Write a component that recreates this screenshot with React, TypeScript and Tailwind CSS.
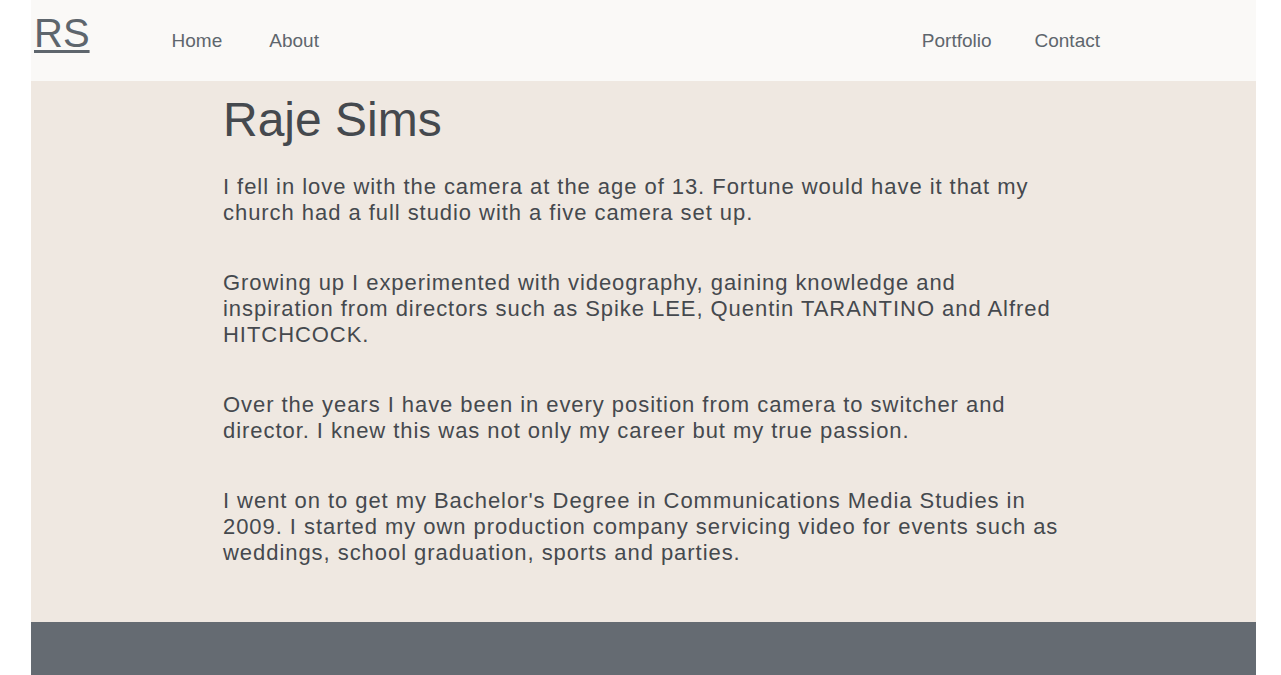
const leftLinks = ['Home', 'About'];
const rightLinks = ['Portfolio', 'Contact'];

const paragraphs = [
  'I fell in love with the camera at the age of 13. Fortune would have it that my church had a full studio with a five camera set up.',
  'Growing up I experimented with videography, gaining knowledge and inspiration from directors such as Spike LEE, Quentin TARANTINO and Alfred HITCHCOCK.',
  'Over the years I have been in every position from camera to switcher and director. I knew this was not only my career but my true passion.',
  "I went on to get my Bachelor's Degree in Communications Media Studies in 2009. I started my own production company servicing video for events such as weddings, school graduation, sports and parties."
];

export default function App() {
  return (
    <div className="min-h-screen bg-white font-['Liberation_Sans',Arial,sans-serif]">
      <div className="ml-[31px] w-[1225px]">
        <nav className="flex h-[81px] items-baseline bg-[#faf9f7] pt-[10px]">
          <a href="#" className="ml-[3px] text-[40px] leading-[46px] text-[#5e666d] underline decoration-[3px] underline-offset-[3px]">
            RS
          </a>
          <ul className="ml-[82px] flex gap-[47px]">
            {leftLinks.map((link) => (
              <li key={link}>
                <a href="#" className="text-[19px] text-[#5e666d]">
                  {link}
                </a>
              </li>
            ))}
          </ul>
          <ul className="mr-[156px] ml-auto flex gap-[43px]">
            {rightLinks.map((link) => (
              <li key={link}>
                <a href="#" className="text-[19px] text-[#5e666d]">
                  {link}
                </a>
              </li>
            ))}
          </ul>
        </nav>

        <main className="bg-[#efe8e1] pt-[11px] pb-[56px]">
          <div className="mx-auto w-[841px] text-[#45494e]">
            <h1 className="text-[48px] leading-[56px]">Raje Sims</h1>
            <div className="mt-[26px] space-y-[44px]">
              {paragraphs.map((text) => (
                <p key={text.slice(0, 12)} className="text-[22px] leading-[26px] tracking-[0.95px]">
                  {text}
                </p>
              ))}
            </div>
          </div>
        </main>

        <footer className="h-[53px] bg-[#656b72]" />
      </div>
    </div>
  );
}
